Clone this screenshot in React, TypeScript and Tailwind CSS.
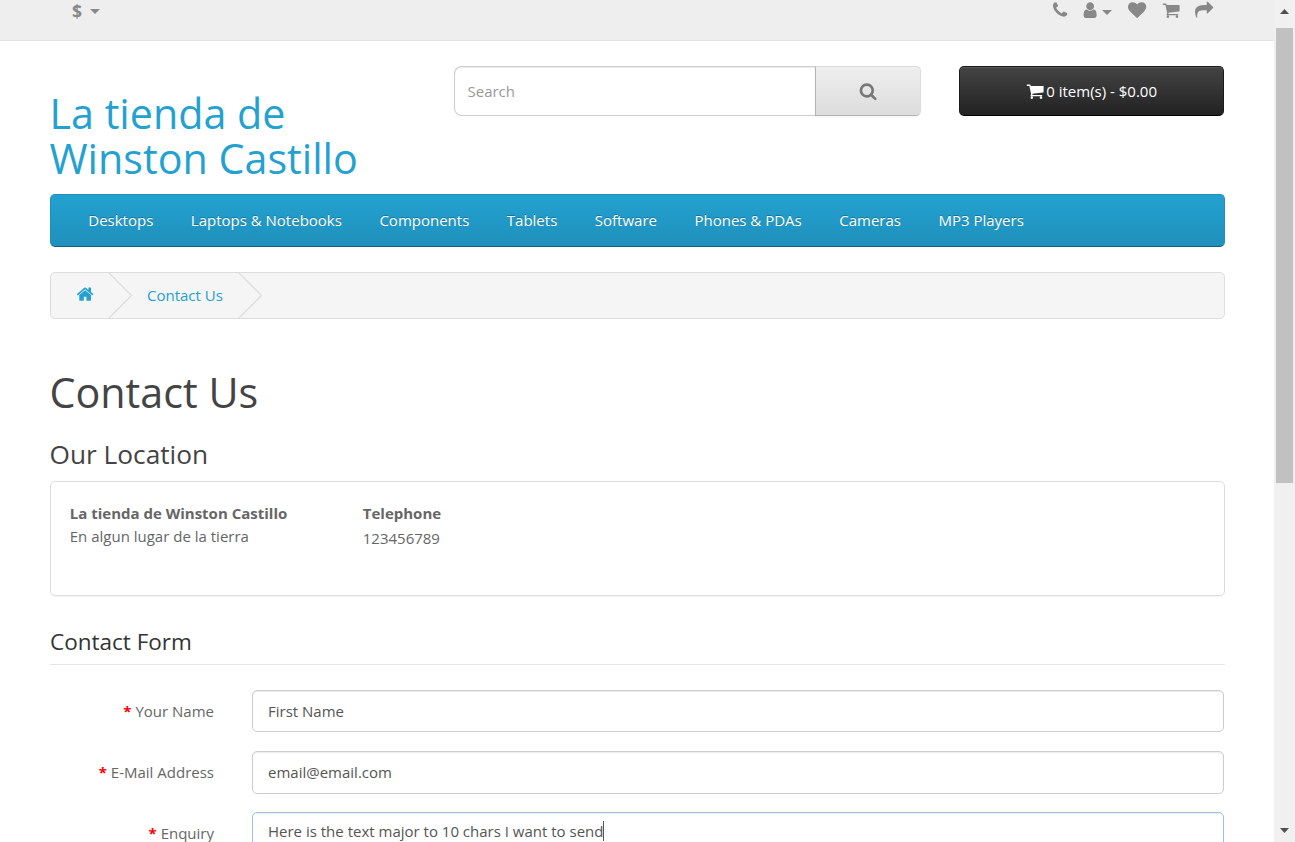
import React from "react";

const PATHS = {
  phone:
    "M1600 1240q0 27-10 70.5t-21 68.5q-21 50-122 106-94 51-186 51-27 0-52.5-3.5t-57.5-12.5-47.5-14.5-55.5-20.5-49-18q-98-35-175-83-128-79-264.5-215.5t-215.5-264.5q-48-77-83-175-3-9-18-49t-20.5-55.5-14.5-47.5-12.5-57.5-3.5-52.5q0-92 51-186 56-101 106-122 25-11 68.5-21t70.5-10q14 0 21 3 18 6 53 76 11 19 30 54t35 63.5 31 53.5q3 4 17.5 25t21.5 35.5 7 28.5q0 20-28.5 50t-62 55-62 53-28.5 46q0 9 5 22.5t8.5 20.5 14 24 11.5 19q76 137 174 235t235 174q2 1 19 11.5t24 14 20.5 8.5 22.5 5q18 0 46-28.5t53-62 55-62 50-28.5q14 0 28.5 7t35.5 21.5 25 17.5q25 15 53.5 31t63.5 35 54 30q70 35 76 53 3 7 3 21z",
  user:
    "M1536 1399q0 109-62.5 187t-150.5 78h-854q-88 0-150.5-78t-62.5-187q0-85 8.5-160.5t31.5-152 58.5-131 94-89 134.5-34.5q131 128 313 128t313-128q76 0 134.5 34.5t94 89 58.5 131 31.5 152 8.5 160.5zm-256-887q0 159-112.5 271.5t-271.5 112.5-271.5-112.5-112.5-271.5 112.5-271.5 271.5-112.5 271.5 112.5 112.5 271.5z",
  heart:
    "M896 1664q-26 0-44-18l-624-602q-10-8-27.5-26t-55.5-65.5-68-97.5-53.5-121-23.5-138q0-220 127-344t351-124q62 0 126.5 21.5t120 58 95.5 68.5 76 68q36-36 76-68t95.5-68.5 120-58 126.5-21.5q224 0 351 124t127 344q0 221-229 450l-623 600q-18 18-44 18z",
  cart:
    "M704 1536q0 52-38 90t-90 38-90-38-38-90 38-90 90-38 90 38 38 90zm896 0q0 52-38 90t-90 38-90-38-38-90 38-90 90-38 90 38 38 90zm128-1088v512q0 24-16.5 42.5t-40.5 21.5l-1044 122q13 60 13 70 0 16-24 64h920q26 0 45 19t19 45-19 45-45 19h-1024q-26 0-45-19t-19-45q0-11 8-31.5t16-36 21.5-40 15.5-29.5l-177-823h-204q-26 0-45-19t-19-45 19-45 45-19h256q16 0 28.5 6.5t19.5 15.5 13 24.5 8 26 5.5 29.5 4.5 26h1201q26 0 45 19t19 45z",
  share:
    "M1792 640q0 26-19 45l-512 512q-19 19-45 19t-45-19-19-45v-256h-224q-98 0-175.5 6t-154 21.5-133 42.5-105.5 69.5-80 101-48.5 138.5-17.5 181q0 55 5 123 0 6 2.5 23.5t2.5 26.5q0 15-8.5 25t-23.5 10q-16 0-28-17-7-9-13-22t-13.5-30-10.5-24q-127-285-127-451 0-199 53-333 162-403 875-403h224v-256q0-26 19-45t45-19 45 19l512 512q19 19 19 45z",
  home:
    "M1472 992v480q0 26-19 45t-45 19h-384v-384h-256v384h-384q-26 0-45-19t-19-45v-480q0-1 .5-3t.5-3l575-474 575 474q1 2 1 6zm223-69l-62 74q-8 9-21 11h-3q-13 0-21-7l-692-577-692 577q-12 8-24 7-13-2-21-11l-62-74q-8-10-7-23.5t11-21.5l719-599q32-26 76-26t76 26l244 204v-195q0-14 9-23t23-9h192q14 0 23 9t9 23v408l219 182q10 8 11 21.5t-7 23.5z",
  search:
    "M1216 832q0-185-131.5-316.5t-316.5-131.5-316.5 131.5-131.5 316.5 131.5 316.5 316.5 131.5 316.5-131.5 131.5-316.5zm512 832q0 52-38 90t-90 38q-54 0-90-38l-343-342q-179 124-399 124-143 0-273.5-55.5t-225-150-150-225-55.5-273.5 55.5-273.5 150-225 225-150 273.5-55.5 273.5 55.5 225 150 150 225 55.5 273.5q0 220-124 399l343 343q37 37 37 90z",
};

function Icon({ name, className = "" }: { name: keyof typeof PATHS; className?: string }) {
  return (
    <svg viewBox="0 0 1792 1792" fill="currentColor" aria-hidden="true" className={`size-[18.25px] shrink-0 overflow-visible ${className}`}>
      <path d={PATHS[name]} />
    </svg>
  );
}

function Caret({ className = "" }: { className?: string }) {
  return (
    <svg viewBox="0 0 10 5" fill="currentColor" aria-hidden="true" className={`h-[5px] w-2.5 shrink-0 ${className}`}>
      <path d="M0 0h10L5 5z" />
    </svg>
  );
}

function TopBar() {
  return (
    <div className="h-[41px] border-b border-[#e2e2e2] bg-[#eeeeee] pr-[61px] pl-[72px] text-[#888888]">
      <div className="flex h-[22px] items-start justify-between">
        <div className="flex items-center">
          <strong className="text-[17.5px] leading-[23px] font-bold">$</strong>
          <Caret className="ml-[8px]" />
        </div>
        <div className="flex pt-px">
          <Icon name="phone" className="mr-[11.5px]" />
          <Icon name="user" />
          <Caret className="mt-[9px] mr-[16px] ml-[3.5px]" />
          <Icon name="heart" className="mr-[15.5px]" />
          <Icon name="cart" className="mr-[14.5px]" />
          <Icon name="share" />
        </div>
      </div>
    </div>
  );
}

function Header() {
  return (
    <header className="flex h-[153px] items-start pt-[25px]">
      <h1 className="mt-[25px] -ml-[0.5px] w-[404.5px] text-[41.25px] leading-[45.375px] text-[#23a1d1]">
        La tienda de
        <br />
        Winston Castillo
      </h1>
      <div className="flex h-[50px] w-[467px]">
        <div className="flex w-[361px] items-center rounded-l-[7.5px] border border-r-0 border-[#cccccc] bg-white pt-px pl-[12.5px] text-[15px] text-[#999999] shadow-[inset_0_1px_1px_rgba(0,0,0,0.075)]">
          Search
        </div>
        <button className="flex w-[106px] items-center justify-center rounded-r-[5px] border border-t-[#dddddd] border-r-[#dddddd] border-b-[#b3b3b3] border-l-[#b3b3b3] bg-linear-to-b from-[#eeeeee] to-[#dddddd] text-[#777777] shadow-[0_1px_2px_rgba(0,0,0,0.05)]">
          <Icon name="search" className="ml-px" />
        </button>
      </div>
      <button className="ml-[38px] flex h-[50px] w-[265px] items-center justify-center rounded-[5px] border border-[#1a1a1a] border-b-black bg-linear-to-b from-[#444444] to-[#222222] pt-px text-[15px] text-white shadow-[inset_0_1px_0_rgba(255,255,255,0.1)]">
        <Icon name="cart" className="mr-[2px]" />
        0 item(s) - $0.00
      </button>
    </header>
  );
}

const MENU = ["Desktops", "Laptops & Notebooks", "Components", "Tablets", "Software", "Phones & PDAs", "Cameras", "MP3 Players"];

function Nav() {
  return (
    <nav className="flex h-[53px] items-center gap-[37.5px] rounded-[5px] border border-t-[#1f90bb] border-r-[#1f90bb] border-b-[#145e7a] border-l-[#1f90bb] bg-linear-to-b from-[#23a1d1] to-[#1f90bb] pl-[37.25px] text-[15px] text-white [text-shadow:0_-1px_0_rgba(0,0,0,0.25)]">
      {MENU.map((m) => (
        <a key={m} className="whitespace-nowrap">{m}</a>
      ))}
    </nav>
  );
}

function Chevron() {
  return (
    <svg viewBox="0 0 25 45" fill="none" stroke="#dddddd" strokeWidth="1.25" className="h-[45px] w-[25px] shrink-0">
      <path d="M0.5 -0.5L23.5 22.5L0.5 45.5" />
    </svg>
  );
}

function Breadcrumb() {
  return (
    <div className="mt-[25px] flex h-[47px] items-center rounded-[5px] border border-[#dddddd] bg-[#f5f5f5] text-[15px] text-[#23a1d1]">
      <div className="flex w-[57px] pb-[2px] pl-[24.5px]">
        <Icon name="home" />
      </div>
      <Chevron />
      <a className="ml-[14px] w-[91px] whitespace-nowrap">Contact Us</a>
      <Chevron />
    </div>
  );
}

const FIELDS = [
  { label: "Your Name", value: "First Name", box: "h-[42px] mb-[19px]", text: "pt-px" },
  { label: "E-Mail Address", value: "email@email.com", box: "h-[43px] mb-[18px]", text: "" },
];

function Label({ children }: { children: React.ReactNode }) {
  return (
    <label className="w-[164px] text-right text-[15px] text-[#666666]">
      <span className="font-bold text-[#ff0000]">* </span>
      {children}
    </label>
  );
}

function ContactForm() {
  return (
    <form>
      <h2 className="mt-[30px] mb-[25px] h-[39px] border-b border-[#e5e5e5] text-[22.5px] leading-[32px] text-[#333333]">Contact Form</h2>
      {FIELDS.map((f) => (
        <div key={f.label} className={`flex items-center ${f.box}`}>
          <div className={`flex ${f.text}`}>
            <Label>{f.label}</Label>
          </div>
          <div className={`ml-[38px] flex h-full w-[972px] items-center rounded-[5px] border border-[#cccccc] pl-[15px] text-[15px] text-[#555555] shadow-[inset_0_1px_1px_rgba(0,0,0,0.075)] ${f.text}`}>
            {f.value}
          </div>
        </div>
      ))}
      <div className="flex h-[240px] items-start">
        <div className="flex pt-[11px]">
          <Label>Enquiry</Label>
        </div>
        <div className="ml-[38px] flex h-full w-[972px] items-start rounded-[5px] border border-[#9dc1df] pt-[8px] pl-[15px] text-[15px] leading-[21px] text-[#555555] shadow-[inset_0_1px_1px_rgba(0,0,0,0.075)]">
          Here is the text major to 10 chars I want to send
          <span className="h-[20px] w-px bg-[#555555]" />
        </div>
      </div>
    </form>
  );
}

function Scrollbar() {
  return (
    <div className="flex w-[21px] shrink-0 flex-col items-center bg-[#f0f0f0]">
      <div className="flex h-[28px] items-start pt-[9px]">
        <svg viewBox="0 0 9 5" fill="#505050" className="h-[5px] w-[9px]">
          <path d="M0 5h9L4.5 0z" />
        </svg>
      </div>
      <div className="h-[455px] w-[17px] bg-[#c1c1c1]" />
      <svg viewBox="0 0 9 5" fill="#505050" className="mt-auto mb-[9px] h-[5px] w-[9px]">
        <path d="M0 0h9L4.5 5z" />
      </svg>
    </div>
  );
}

export default function App() {
  return (
    <div className="flex h-[842px] w-[1295px] overflow-hidden bg-white font-['Open_Sans',sans-serif] text-[15px] leading-[21.4px] text-[#666666]">
      <div className="h-full flex-1 overflow-hidden">
        <TopBar />
        <div className="ml-[50px] w-[1175px]">
          <Header />
          <Nav />
          <Breadcrumb />
          <h1 className="mt-[50px] -ml-[0.5px] text-[41.25px] leading-[46px] text-[#444444]">Contact Us</h1>
          <h3 className="mt-[25px] -ml-[0.5px] text-[26.25px] leading-[28px] text-[#444444]">Our Location</h3>
          <section className="mt-[13px] flex h-[115px] rounded-[5px] border border-[#dddddd] pr-[19px] pl-[18.75px] pt-[20px] shadow-[0_1px_1px_rgba(0,0,0,0.05)]">
            <div className="w-[293px]">
              <strong className="block font-bold leading-[22px]">La tienda de Winston Castillo</strong>
              <address className="mt-px leading-[22px] not-italic">En algun lugar de la tierra</address>
            </div>
            <div>
              <strong className="block font-bold leading-[22px]">Telephone</strong>
              <div className="mt-[3px] leading-[22px]">123456789</div>
            </div>
          </section>
          <ContactForm />
        </div>
      </div>
      <Scrollbar />
    </div>
  );
}
